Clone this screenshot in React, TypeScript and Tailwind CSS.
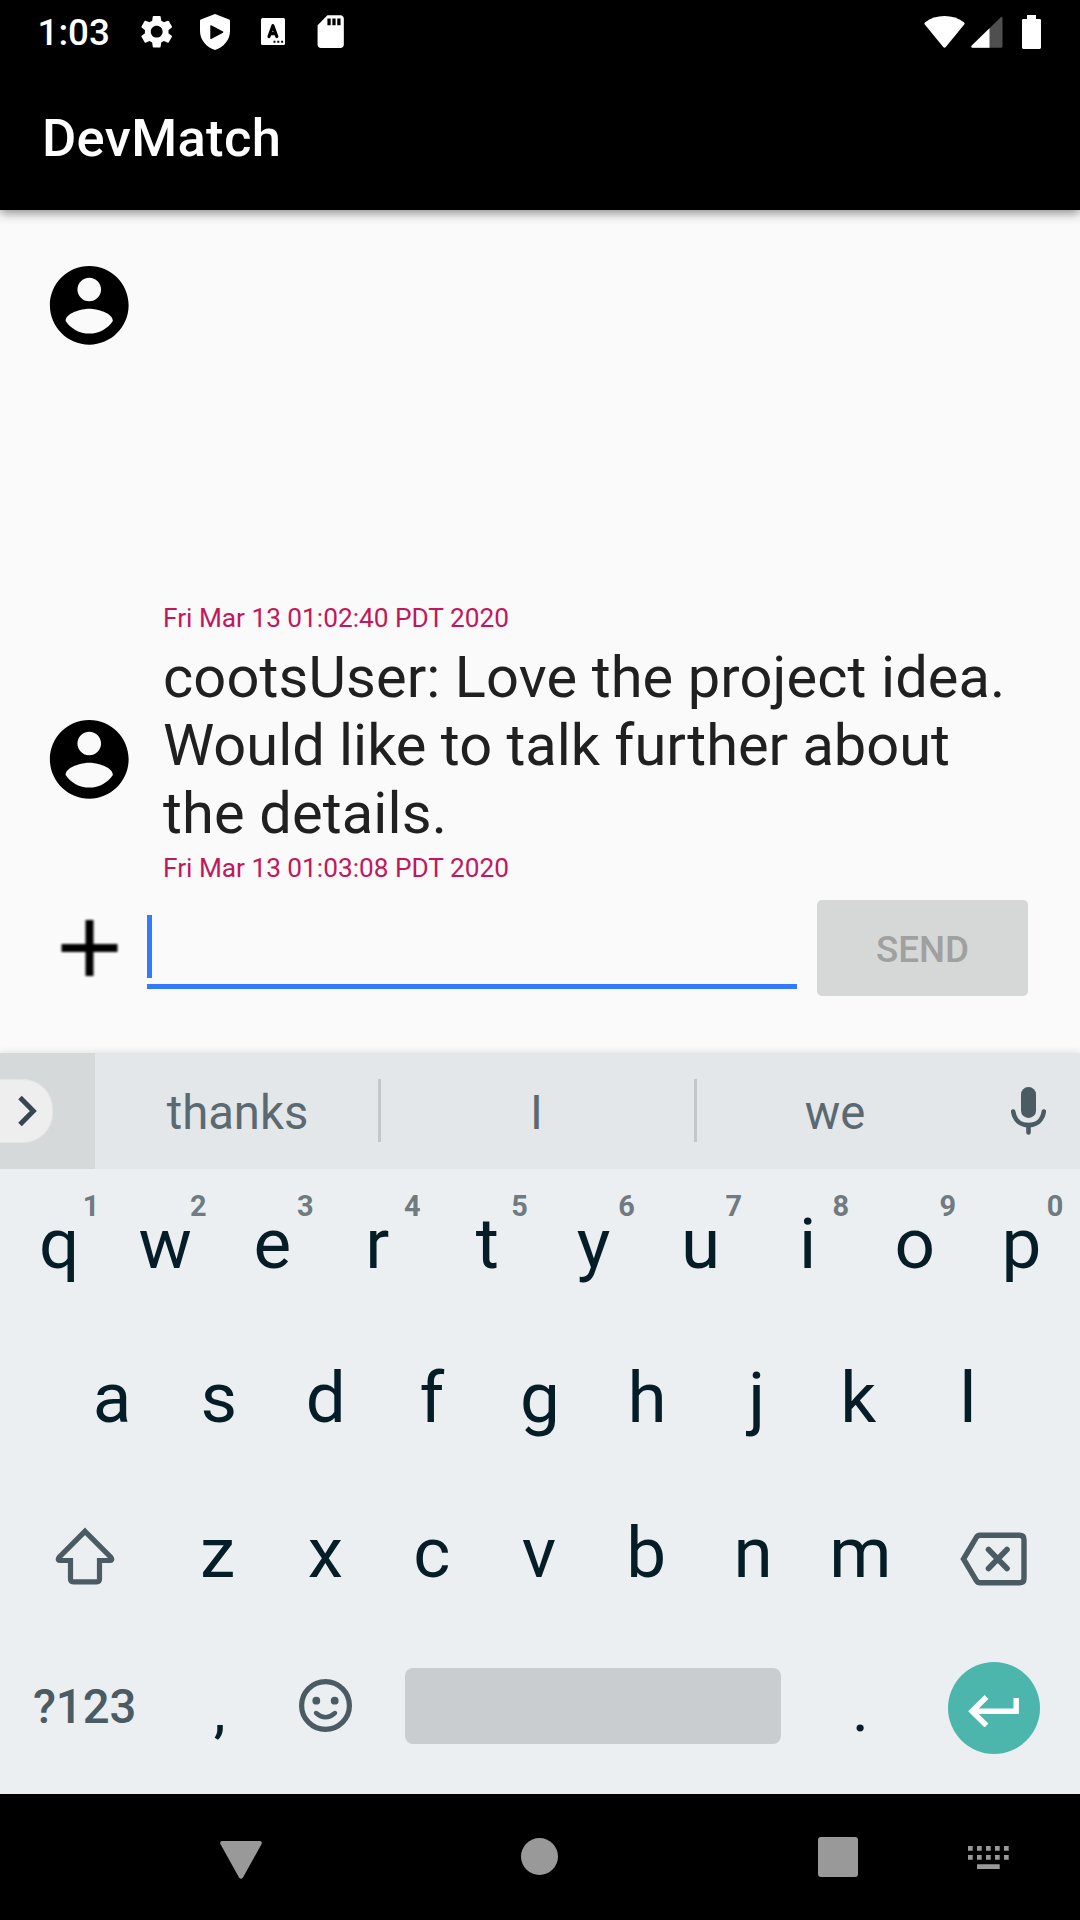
import React from "react";
import { MdSettings, MdSdCard } from "react-icons/md";

function StatusBar() {
  return (
    <div className="flex h-[63px] items-start bg-black text-white">
      <span className="ml-[37.5px] mt-[10px] h-[46px] w-[102.5px] text-[36.75px] font-medium leading-[46px]">1:03</span>
      <div className="flex h-[63px] flex-1 items-center">
        <MdSettings className="ml-[-3px] size-[39.4px]" />
        <svg className="ml-[23.6px] h-[36px] w-[30px]" viewBox="0 0 30 36" fill="currentColor">
          <path
            fillRule="evenodd"
            d="M15 0 29.2 5.4Q30 5.7 30 6.7V17C30 26 23.5 33.3 15 36 6.5 33.3 0 26 0 17V6.7Q0 5.7 .8 5.4ZM10.3 11.8V24.4Q10.3 25.4 11.2 25L23 18.7Q24 18.1 23 17.5L11.2 11.3Q10.3 10.9 10.3 11.8Z"
          />
        </svg>
        <svg className="ml-[31px] h-[27px] w-[24px]" viewBox="0 0 24 27">
          <rect width="24" height="27" rx="1.5" fill="#fff" />
          <path d="M8 18.500 11.900 7.700 15.800 18.500M9.500 15.600H14.300" fill="none" stroke="#000" strokeWidth="3.200" strokeLinecap="round" strokeLinejoin="round" />
          <path d="M12.5 22.8h2v2h-2zM16.3 22.8h2v2h-2zM20.1 22.8h2v2h-2z" fill="#000" />
        </svg>
        <MdSdCard className="ml-[26.3px] size-[39.4px]" />
        <svg className="ml-auto h-[32px] w-[41px]" viewBox="0 0 41 32" fill="currentColor">
          <path d="M20.500 0C28 0 34.500 2.200 39.800 6.200Q41.200 7.300 40.200 8.600L21.800 31Q20.500 32.400 19.200 31L.8 8.600Q-.2 7.300 1.200 6.200C6.500 2.200 13 0 20.500 0Z" />
        </svg>
        <svg className="ml-[5.5px] h-[32px] w-[32px]" viewBox="0 0 32 32">
          <path d="M31.5 2Q31.5-.2 29.8 1.2L.8 29.6Q-.4 31.8 1.5 31.8H30Q31.5 31.8 31.5 30.5Z" fill="#4f4f4f" />
          <path d="M18.5 12.2.8 29.6Q-.4 31.8 1.5 31.8H18.5Z" fill="#fff" />
        </svg>
        <svg className="ml-[19.5px] mr-[39px] h-[34px] w-[19px]" viewBox="0 0 19 34" fill="currentColor">
          <path d="M5 0h9v4h3.8Q19 4 19 5.2V32.6Q19 34 17.6 34H1.4Q0 34 0 32.6V5.2Q0 4 1.2 4H5Z" />
        </svg>
      </div>
    </div>
  );
}

function AppBar() {
  return (
    <header className="relative z-10 flex h-[147px] items-center bg-black pl-[42px] pt-[3px] text-[52.5px] font-medium leading-[62px] tracking-[0.35px] text-white shadow-[0_3px_10px_rgba(0,0,0,0.45)]">
      DevMatch
    </header>
  );
}

function Avatar({ className = "" }: { className?: string }) {
  return (
    <svg className={`size-[94.5px] shrink-0 ${className}`} viewBox="0 0 24 24" fill="#000">
      <path d="M12 2C6.480 2 2 6.480 2 12s4.480 10 10 10 10-4.480 10-10S17.520 2 12 2zm0 3c1.660 0 3 1.340 3 3s-1.340 3-3 3-3-1.340-3-3 1.340-3 3-3zm0 14.200c-2.500 0-4.710-1.280-6-3.220.03-1.990 4-3.080 6-3.080 1.990 0 5.970 1.090 6 3.080-1.290 1.940-3.500 3.220-6 3.220z" />
    </svg>
  );
}

function Timestamp({ children }: { children: React.ReactNode }) {
  return <div className="h-[31px] text-[26.25px] leading-[33px] tracking-[-0.02px] text-[#c2185b]">{children}</div>;
}

function Chat() {
  return (
    <main className="h-[843px] bg-[#fafafa] pl-[42px] pt-[48px]">
      <article className="flex h-[375px]">
        <Avatar />
        <div className="ml-[26.5px] self-end">
          <Timestamp>Fri Mar 13 01:02:40 PDT 2020</Timestamp>
        </div>
      </article>
      <article className="mt-[10px] flex h-[240px]">
        <Avatar className="mt-[69px]" />
        <div className="ml-[26.5px]">
          <p className="whitespace-nowrap text-[57.75px] leading-[68px] text-[#202020]">
            <span className="block tracking-[0.12px]">cootsUser: Love the project idea.</span>
            <span className="block">Would like to talk further about</span>
            <span className="block tracking-[0.15px]">the details.</span>
          </p>
          <div className="mt-[5px]">
            <Timestamp>Fri Mar 13 01:03:08 PDT 2020</Timestamp>
          </div>
        </div>
      </article>
      <div className="mt-[17px] flex h-[96px]">
        <svg className="h-[96px] w-[95px]" viewBox="0 0 95 96">
          <path d="M47.5 20v56M19.500 48h56" stroke="#000" strokeWidth="8" className="blur-[1.2px]" />
        </svg>
        <div className="ml-[10px] h-[89px] w-[650px] border-b-[5px] border-[#337aff] pt-[15px]">
          <div className="h-[63px] w-[5px] bg-[#337aff]" />
        </div>
        <button className="ml-[20px] h-[96px] w-[211px] rounded-[5px] bg-[#d6d7d7] pt-[3px] text-[36.75px] font-medium leading-[43px] text-[#a0a0a0]">
          SEND
        </button>
      </div>
    </main>
  );
}

function Suggestions() {
  return (
    <div className="flex h-[116px] items-center bg-[#e3e7ea] text-[47.25px] leading-[56px] text-[#5b6a71] shadow-[0_-1px_7px_rgba(0,0,0,0.1)]">
      <div className="flex h-full w-[95px] items-center bg-[#d5d9da]">
        <div className="flex h-[64px] w-[53px] items-center rounded-r-[30px] border border-l-0 border-[#e4e6e6] bg-[#eeeeee]">
          <svg className="ml-[17px] h-[32px] w-[22px]" viewBox="0 0 22 32">
            <path d="M3 2.5 16.3 16 3 29.5" fill="none" stroke="#37474f" strokeWidth="5" />
          </svg>
        </div>
      </div>
      <div className="w-[283px] pl-[2px] pt-[4px] text-center">thanks</div>
      <div className="mb-[1px] h-[63px] w-[3px] bg-[#c2c7ca]" />
      <div className="w-[313px] pr-[2px] pt-[4px] text-center">I</div>
      <div className="mb-[1px] h-[63px] w-[3px] bg-[#c2c7ca]" />
      <div className="w-[276px] pt-[4px] text-center">we</div>
      <svg className="mb-[1px] ml-[38px] h-[48px] w-[35px]" viewBox="0 0 35 48">
        <rect x="10" y="0" width="15" height="31" rx="7.3" fill="#4b5b63" />
        <path d="M2.2 24.5C3.5 33 9 38 17.5 38S31.500 33 32.8 24.500M17.500 38v7.500" fill="none" stroke="#4b5b63" strokeWidth="4.600" strokeLinecap="round" />
      </svg>
    </div>
  );
}

/* Optical centering for glyphs with uneven side bearings. */
const nudge: Record<string, string> = {
  q: "pl-[2px]",
  t: "pl-[2px]",
  r: "pr-[4px]",
  f: "pr-[2px]",
  j: "pl-[5px]",
  k: "pr-[6px]",
  a: "pl-[1px]",
  x: "pl-[1px]",
  l: "pr-[1px]",
  p: "pr-[1px]",
};

function Key({ label, hint }: { label: string; hint?: string }) {
  return (
    <div className={`relative flex h-full w-[107.1px] items-center justify-center ${nudge[label] ?? ""}`}>
      {label}
      {hint && (
        <span className="absolute right-0 top-[20px] w-[41px] text-center text-[28.9px] font-bold leading-[34px] text-[#6f7b81]">
          {hint}
        </span>
      )}
    </div>
  );
}

function Keyboard() {
  const top = "qwertyuiop".split("");
  return (
    <section className="h-[625px] bg-[#ebeff2] text-[71px] leading-[84px] text-[#051d27]">
      <div className="flex h-[154px] justify-center">
        {top.map((k, i) => (
          <div key={k} className="h-[149px]">
            <Key label={k} hint={String((i + 1) % 10)} />
          </div>
        ))}
      </div>
      <div className="flex h-[154px] justify-center pb-[5px]">
        {"asdfghjkl".split("").map((k) => (
          <Key key={k} label={k} />
        ))}
      </div>
      <div className="flex h-[156px] items-center justify-center pb-[5px] pr-[2px]">
        <div className="flex w-[160px] justify-center pl-[2px]">
          <svg className="mt-[6px] h-[58px] w-[60px]" viewBox="0 0 60 58">
            <path
              d="M30 4.300 56 30.500Q58 33.500 54.500 33.500H44.500V52Q44.500 54.800 41.700 54.800H18.300Q15.500 54.800 15.500 52V33.500H5.500Q2 33.500 4 30.500Z"
              fill="none"
              stroke="#4b5b63"
              strokeWidth="5.200"
            />
          </svg>
        </div>
        {"zxcvbnm".split("").map((k) => (
          <Key key={k} label={k} />
        ))}
        <div className="flex w-[160px] justify-center">
          <svg className="mt-[12px] h-[54px] w-[68px]" viewBox="0 0 68 54">
            <path
              d="M20 3.200H59.500Q64 3.200 64 7.500V46.500Q64 50.800 59.500 50.800H20Q17.800 50.800 16.500 48.800L3.500 27 16.500 5.200Q17.800 3.200 20 3.200Z"
              fill="none"
              stroke="#4b5b63"
              strokeWidth="5.400"
            />
            <path d="M28.500 17.500 47 36.500M47 17.500 28.500 36.500" stroke="#4b5b63" strokeWidth="5.600" strokeLinecap="round" />
          </svg>
        </div>
      </div>
      <div className="flex h-[161px] items-center justify-center pb-[14px] pr-[2px]">
        <div className="w-[160px] pl-[1px] text-center text-[47.25px] font-medium leading-[56px] text-[#4b5b63]">?123</div>
        <div className="w-[107.1px] pl-[4px] pt-[13px] text-center text-[53px] font-medium leading-[62px]">,</div>
        <div className="flex w-[107.1px] justify-center pl-[1px]">
          <svg className="mt-[-2px] size-[53px]" viewBox="0 0 53 53">
            <circle cx="26.5" cy="26.5" r="23.9" fill="none" stroke="#4b5b63" strokeWidth="5.200" />
            <circle cx="17.300" cy="21.700" r="3.900" fill="#4b5b63" />
            <circle cx="35.700" cy="21.700" r="3.900" fill="#4b5b63" />
            <path d="M17 34Q26.500 42.500 36 34" fill="none" stroke="#4b5b63" strokeWidth="4.400" strokeLinecap="round" />
          </svg>
        </div>
        <div className="flex w-[428.4px] justify-center">
          <div className="mb-[1px] h-[76px] w-[376px] rounded-[8px] bg-[#c9cdd0]" />
        </div>
        <div className="w-[107.1px] pt-[13px] text-center text-[53px] font-medium leading-[62px]">.</div>
        <div className="flex w-[160px] justify-center">
          <div className="mt-[3px] flex size-[92px] items-center justify-center rounded-full bg-[#4db6ac]">
            <svg className="mt-[6px] h-[32px] w-[51px]" viewBox="0 0 51 32">
              <path d="M48.200 3V16.300H4M18.500 2 4 16.300 18.500 30.500" fill="none" stroke="#fff" strokeWidth="5.400" />
            </svg>
          </div>
        </div>
      </div>
    </section>
  );
}

function NavBar() {
  return (
    <nav className="flex h-[126px] items-center bg-black text-[#999999]">
      <svg className="ml-[220px] mt-[5px] h-[38px] w-[42px]" viewBox="0 0 42 38" fill="currentColor">
        <path d="M2 0H40Q42.500 .3 41.600 3L23 36.500Q21 39 19 36.500L.4 3Q-.5 .3 2 0Z" />
      </svg>
      <div className="mb-[1px] ml-[259px] size-[37px] rounded-full bg-current" />
      <div className="ml-[260px] size-[40px] rounded-[3px] bg-current" />
      <svg className="ml-[110px] mt-[1px] h-[23px] w-[41px]" viewBox="0 0 41 23" fill="currentColor">
        <path d="M0 0h4.700v4.700H0zM9 0h4.700v4.700H9zM18 0h4.700v4.700H18zM27 0h4.700v4.700H27zM36 0h4.700v4.700H36zM0 9h4.700v4.700H0zM9 9h4.700v4.700H9zM18 9h4.700v4.700H18zM27 9h4.700v4.700H27zM36 9h4.700v4.700H36zM9 18.200h22.700v4.700H9z" />
      </svg>
    </nav>
  );
}

export default function App() {
  return (
    <div className="h-[1920px] w-[1080px] overflow-hidden font-['Roboto',sans-serif]">
      <StatusBar />
      <AppBar />
      <Chat />
      <Suggestions />
      <Keyboard />
      <NavBar />
    </div>
  );
}
